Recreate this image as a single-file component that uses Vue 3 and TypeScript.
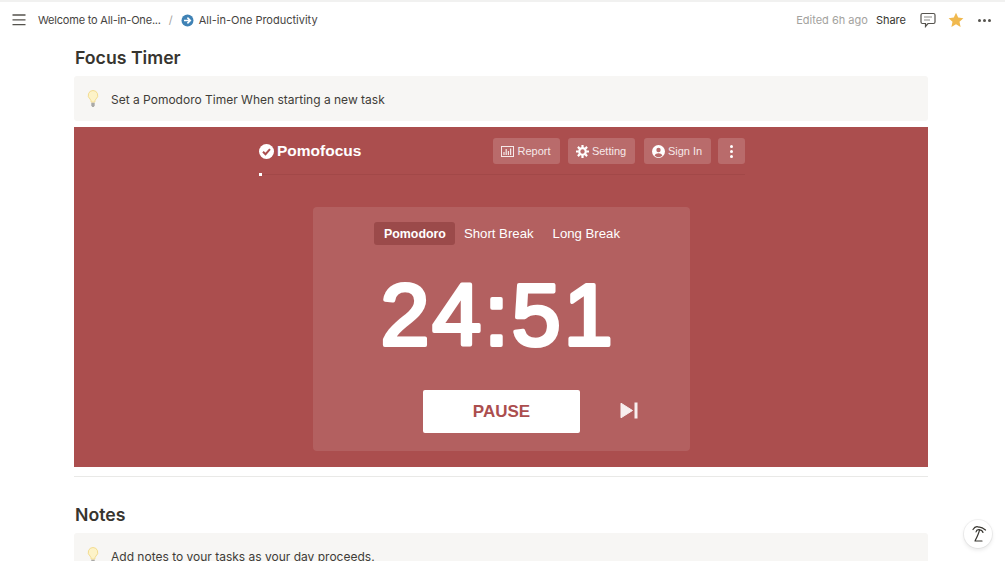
<template>
  <div class="page">
    <header class="topbar">
      <svg class="menu-icon" width="14" height="12" viewBox="0 0 14 12">
        <path d="M.5 1h13M.5 5.800h13M.5 10.600h13" stroke="#55534e" stroke-width="1.300" fill="none" />
      </svg>
      <span class="crumb first">Welcome to All-in-One...</span>
      <span class="slash">/</span>
      <svg class="crumb-icon" width="13" height="13" viewBox="0 0 13 13">
        <circle cx="6.500" cy="6.500" r="6" fill="#3f82b5" />
        <path d="M3 6.500h6M6.400 3.600l2.900 2.900-2.900 2.900" stroke="#fff" stroke-width="1.600" fill="none" />
      </svg>
      <span class="crumb">All-in-One Productivity</span>
      <div class="spacer"></div>
      <span class="edited">Edited 6h ago</span>
      <span class="share">Share</span>
      <svg class="comment-icon" width="16" height="16" viewBox="0 0 16 16">
        <path d="M2.500 1.500h11a1.500 1.500 0 0 1 1.500 1.500v7a1.500 1.500 0 0 1-1.500 1.500H8l-2.500 3v-3h-3A1.500 1.500 0 0 1 1 10V3a1.500 1.500 0 0 1 1.500-1.500z" fill="none" stroke="#55534e" stroke-width="1.200" />
        <path d="M4 5h8M4 8h6" stroke="#8a8985" stroke-width="1.200" />
      </svg>
      <svg class="star-icon" width="16" height="16" viewBox="0 0 16 16">
        <path d="M8 .8l2.200 4.800 5.200.6-3.900 3.500 1.100 5.200L8 12.300l-4.600 2.600 1.100-5.200L.6 6.200l5.200-.6z" fill="#f0b94f" />
      </svg>
      <div class="dots"><i></i><i></i><i></i></div>
    </header>

    <main class="content">
      <h2 class="heading">Focus Timer</h2>
      <div class="callout">
        <svg class="bulb" width="14" height="20" viewBox="0 0 14 20">
          <path d="M7 1.500a4.800 4.800 0 0 0-2.900 8.600c.8.800 1 1.700 1.100 3h3.600c.1-1.300.3-2.200 1.100-3A4.800 4.800 0 0 0 7 1.500z" fill="#fdf3c8" stroke="#f3dc90" stroke-width="1" />
          <path d="M5.300 13.800h3.400v2.400l-.9 1.700H6.200l-.9-1.700z" fill="#a9a9a6" />
        </svg>
        <span>Set a Pomodoro Timer When starting a new task</span>
      </div>

      <section class="embed">
        <div class="inner">
          <nav class="nav">
            <div class="logo">
              <svg width="15" height="15" viewBox="0 0 15 15">
                <circle cx="7.500" cy="7.500" r="7.500" fill="#fff" />
                <path d="M4 7.700l2.500 2.500L11 5.200" stroke="#ab4e4e" stroke-width="2" fill="none" />
              </svg>
              <span>Pomofocus</span>
            </div>
            <div class="nav-buttons">
              <button class="nav-btn report">
                <svg width="13" height="11" viewBox="0 0 13 11">
                  <rect x=".5" y=".5" width="12" height="10" fill="none" stroke="#fff" stroke-opacity=".85" />
                  <path d="M3 9V6M5.200 9V3M7.400 9V5M9.600 9V2.500" stroke="#fff" stroke-opacity=".85" stroke-width="1.200" />
                </svg>
                Report
              </button>
              <button class="nav-btn setting">
                <svg width="13" height="13" viewBox="0 0 13 13">
                  <circle cx="6.500" cy="6.500" r="3.300" fill="none" stroke="#fff" stroke-width="2.200" />
                  <path d="M6.500 0v2.500M6.500 10.500V13M0 6.500h2.500M10.500 6.500H13M1.900 1.900l1.800 1.800M9.300 9.300l1.800 1.800M1.900 11.100l1.800-1.800M9.300 3.700l1.800-1.800" stroke="#fff" stroke-width="2.200" />
                </svg>
                Setting
              </button>
              <button class="nav-btn signin">
                <svg width="13" height="13" viewBox="0 0 13 13">
                  <circle cx="6.500" cy="6.500" r="6.500" fill="#fff" />
                  <circle cx="6.500" cy="5" r="2.200" fill="#b96b6b" />
                  <path d="M2.600 10.500c.7-1.600 2.200-2.300 3.900-2.300s3.200.7 3.900 2.300a5.200 5.200 0 0 1-7.800 0z" fill="#b96b6b" />
                </svg>
                Sign In
              </button>
              <button class="nav-btn more"><i></i><i></i><i></i></button>
            </div>
          </nav>
          <div class="progress"><div class="progress-fill" :style="{ width: progress + 'px' }"></div></div>

          <div class="card">
            <div class="tabs">
              <span v-for="t in tabs" :key="t" class="tab" :class="{ active: t === 'Pomodoro' }">{{ t }}</span>
            </div>
            <svg class="time" width="377" height="108" viewBox="0 0 377 108">
              <text x="185" y="84" text-anchor="middle">{{ time }}</text>
            </svg>
            <div class="controls">
              <span></span>
              <button class="pause">PAUSE</button>
              <svg class="skip" width="18" height="17" viewBox="0 0 18 17">
                <path d="M1 1.200v14.600L12.500 8.500z" fill="#f8eeee" stroke="#f8eeee" stroke-linejoin="round" />
                <rect x="14.500" y=".5" width="3" height="16" fill="#f8eeee" />
              </svg>
            </div>
          </div>
        </div>
      </section>

      <hr class="divider" />

      <h2 class="heading notes">Notes</h2>
      <div class="callout">
        <svg class="bulb" width="14" height="20" viewBox="0 0 14 20">
          <path d="M7 1.500a4.800 4.800 0 0 0-2.900 8.600c.8.800 1 1.700 1.100 3h3.600c.1-1.300.3-2.200 1.100-3A4.800 4.800 0 0 0 7 1.500z" fill="#fdf3c8" stroke="#f3dc90" stroke-width="1" />
          <path d="M5.300 13.800h3.400v2.400l-.9 1.700H6.200l-.9-1.700z" fill="#a9a9a6" />
        </svg>
        <span>Add notes to your tasks as your day proceeds.</span>
      </div>
    </main>

    <div class="help">
      <svg width="18" height="18" viewBox="0 0 18 18">
        <path d="M4 4.500C5.500 2 8 1.200 10 2.200c1.800-.4 4 .8 6.500 2.800M10.200 4.800C8.500 4.500 7.300 5.500 7 7M10.400 4.800c1.500 0 3 .8 3.600 2.700M10.500 4.800C10 8 8 12 6.200 15.500M6 16h7" fill="none" stroke="#37352f" stroke-width="1.200" stroke-linecap="round" />
      </svg>
    </div>
  </div>
</template>

<script setup lang="ts">
const tabs: string[] = ['Pomodoro', 'Short Break', 'Long Break']
const time = '24:51'
const progress = 3
</script>

<style>
html,
body {
  margin: 0;
  background: #fff;
  overflow: hidden;
}
</style>

<style scoped>
.page {
  position: relative;
  width: 1005px;
  height: 561px;
  overflow: hidden;
  box-sizing: border-box;
  border-top: 2px solid #f1f1f0;
  font-family: Inter, "Liberation Sans", sans-serif;
  color: #37352f;
}

.topbar {
  display: flex;
  align-items: center;
  height: 36px;
  padding: 0 14px 0 12px;
  font-size: 11px;
}
.menu-icon {
  margin-right: 12px;
}
.crumb {
  white-space: nowrap;
  color: #46443f;
}
.crumb.first {
  letter-spacing: -0.2px;
}
.slash {
  margin: 0 8px;
  color: #a5a4a0;
}
.crumb-icon {
  margin-right: 5px;
}
.spacer {
  flex: 1;
}
.edited {
  color: #a3a29e;
}
.share {
  margin-left: 8px;
  color: #37352f;
}
.comment-icon {
  margin-left: 14px;
}
.star-icon {
  margin-left: 12px;
}
.dots {
  display: flex;
  gap: 2px;
  margin-left: 14px;
}
.dots i {
  width: 3px;
  height: 3px;
  border-radius: 50%;
  background: #55534e;
}

.content {
  margin-left: 74px;
  width: 854px;
}
.heading {
  margin: 6px 0 4px 1px;
  font-size: 17.700px;
  line-height: 28px;
  font-weight: 600;
  color: #37352f;
}
.heading.notes {
  margin-top: 24px;
}
.callout {
  display: flex;
  align-items: center;
  height: 45px;
  padding-left: 12px;
  box-sizing: border-box;
  background: #f7f6f4;
  border-radius: 3px;
  font-size: 12px;
  color: #3f3d38;
}
.callout span {
  padding-top: 1px;
}
.bulb {
  margin-right: 11px;
}
.embed {
  margin-top: 6px;
  height: 340px;
  background: #ab4e4e;
  display: flex;
  justify-content: center;
}
.inner {
  width: 486px;
  margin-left: 1px;
  display: flex;
  flex-direction: column;
  align-items: center;
  padding-top: 11px;
}
.nav {
  width: 100%;
  display: flex;
  justify-content: space-between;
  height: 26px;
}
.logo {
  display: flex;
  align-items: center;
  gap: 3.500px;
  color: #fff;
  font-family: "Liberation Sans", Arial, sans-serif;
  font-weight: 700;
  font-size: 15.500px;
}
.nav-buttons {
  display: flex;
  gap: 8px;
}
.nav-btn {
  height: 26px;
  width: 67px;
  padding: 0;
  border: 0;
  border-radius: 3px;
  background: #b96b6b;
  color: #f6e9e9;
  font-family: "Liberation Sans", Arial, sans-serif;
  font-size: 11px;
  display: flex;
  align-items: center;
  justify-content: center;
  gap: 3px;
}
.nav-btn.signin {
  margin-left: 1px;
}
.nav-btn.more {
  width: 27px;
  margin-left: -1px;
  flex-direction: column;
  gap: 2px;
}
.nav-btn.more i {
  width: 3px;
  height: 3px;
  border-radius: 50%;
  background: #fff;
}
.progress {
  width: 100%;
  height: 1px;
  margin-top: 10px;
  background: #a24848;
  position: relative;
}
.progress-fill {
  position: absolute;
  left: 0;
  top: -1px;
  height: 3px;
  background: #fff;
}
.card {
  width: 377px;
  height: 244px;
  margin-top: 32px;
  background: #b36060;
  border-radius: 4px;
  box-sizing: border-box;
  padding-top: 15px;
  display: flex;
  flex-direction: column;
  align-items: center;
}
.tabs {
  display: flex;
  height: 23px;
  margin-left: 1px;
}
.tab {
  padding: 0 9.500px;
  color: #fff;
  line-height: 23px;
  font-size: 13.200px;
  font-family: "Liberation Sans", Arial, sans-serif;
  border-radius: 3px;
}
.tab.active {
  background: #9b4a4a;
  font-weight: 700;
  font-size: 12.400px;
  line-height: 24px;
  height: 23px;
  margin-right: -1px;
}
.time {
  margin-top: 16px;
  display: block;
}
.time text {
  font-family: "Liberation Sans", Arial, sans-serif;
  font-size: 88px;
  letter-spacing: 3px;
  fill: #fff;
  stroke: #fff;
  stroke-width: 4px;
  stroke-linejoin: round;
  stroke-linecap: round;
}
.controls {
  margin-top: 21px;
  width: 100%;
  display: grid;
  grid-template-columns: 1fr 157px 1fr;
  align-items: center;
}
.pause {
  height: 43px;
  border: 0;
  border-radius: 2px;
  background: #fff;
  color: #ab4e4e;
  font-family: "Liberation Sans", Arial, sans-serif;
  font-weight: 700;
  font-size: 17px;
  padding: 0;
}
.skip {
  margin-left: 40px;
  margin-top: -2px;
}
.divider {
  margin: 9px 0 0;
  border: 0;
  height: 1px;
  background: #e9e9e7;
}
.help {
  position: absolute;
  left: 964px;
  top: 518px;
  width: 28px;
  height: 28px;
  border-radius: 50%;
  background: #fff;
  box-shadow: 0 0 0 1px rgba(15, 15, 15, 0.05), 0 2px 4px rgba(15, 15, 15, 0.1);
  display: flex;
  align-items: center;
  justify-content: center;
}
</style>
